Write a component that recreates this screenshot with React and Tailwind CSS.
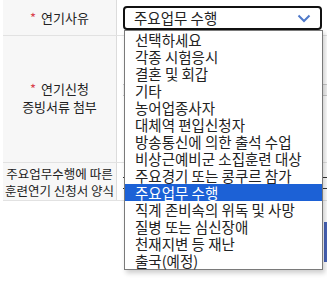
import React from 'react';

const reasons = [
    '선택하세요',
    '각종 시험응시',
    '결혼 및 회갑',
    '기타',
    '농어업종사자',
    '대체역 편입신청자',
    '방송통신에 의한 출석 수업',
    '비상근예비군 소집훈련 대상',
    '주요경기 또는 콩쿠르 참가',
    '주요업무 수행',
    '직계 존비속의 위독 및 사망',
    '질병 또는 심신장애',
    '천재지변 등 재난',
    '출국(예정)',
];

const selected = '주요업무 수행';

const Star = () => <span className="text-[#d9434e] mr-[5px]">*</span>;

const App = () => {
    return (
        <div
            className="relative w-[327px] h-[289px] overflow-hidden bg-white text-[#222] text-[12px]"
            style={{ fontFamily: '"Noto Sans CJK KR", "Noto Sans", sans-serif' }}
        >
            <div className="pl-[3px]">
                {/* row 1 */}
                <div className="flex h-[36px] border-b border-[#e2e2e2]">
                    <div className="w-[114px] shrink-0 bg-[#f7f7f7] border-r border-[#dcdcdc] flex items-center justify-center">
                        <span className="text-[13px]"><Star />연기사유</span>
                    </div>
                    <div className="flex-1 pl-[6px] pt-[6px]">
                        <div className="w-[199px] h-[24px] border-2 border-[#111] rounded-[4px] flex items-center justify-between pl-[9px] pr-[9px] text-[14.5px] bg-white">
                            <span>{selected}</span>
                            <svg width="14" height="9" viewBox="0 0 14 9" fill="none">
                                <polyline points="1.5,1.5 7,7 12.5,1.5" stroke="#4f79c9" strokeWidth="2" />
                            </svg>
                        </div>
                    </div>
                </div>

                {/* row 2 */}
                <div className="flex h-[127px] border-b border-[#e2e2e2]">
                    <div className="w-[114px] shrink-0 bg-[#f7f7f7] border-r border-[#dcdcdc] flex flex-col items-center justify-center leading-[18px] text-[13px] pb-[2px]">
                        <span><Star />연기신청</span>
                        <span>증빙서류 첨부</span>
                    </div>
                    <div className="flex-1 pl-[6px] pt-[48px]">
                        <div className="w-[240px] h-[12px] border-y border-[#c9c9c9] bg-[#f3f3f3]" />
                    </div>
                </div>

                {/* row 3 */}
                <div className="flex h-[38px] border-b border-[#e2e2e2]">
                    <div className="w-[114px] shrink-0 bg-[#f7f7f7] border-r border-[#dcdcdc] flex flex-col items-center justify-center leading-[17px] text-[12.5px] whitespace-nowrap">
                        <span>주요업무수행에 따른</span>
                        <span>훈련연기 신청서 양식</span>
                    </div>
                    <div className="flex-1 pl-[6px] pt-[14px]">
                        <div className="w-[240px] h-[12px] border-y border-[#333]" />
                    </div>
                </div>

                <div className="flex justify-end pt-[21px]">
                    <div className="w-[3px] h-[40px] bg-[#4864b8]" />
                </div>
            </div>

            {/* open dropdown list */}
            <ul className="absolute left-[124px] top-[30px] w-[199px] border border-[#7a7a7a] bg-white shadow-[2px_3px_5px_rgba(0,0,0,0.2)] text-[14.5px]">
                {reasons.map((r) => (
                    <li
                        key={r}
                        className={
                            r === selected
                                ? 'h-[17px] leading-[17px] pl-[10px] bg-[#1c61d6] text-white whitespace-nowrap'
                                : 'h-[17px] leading-[17px] pl-[10px] whitespace-nowrap'
                        }
                    >
                        {r}
                    </li>
                ))}
            </ul>
        </div>
    );
};

export default App;
